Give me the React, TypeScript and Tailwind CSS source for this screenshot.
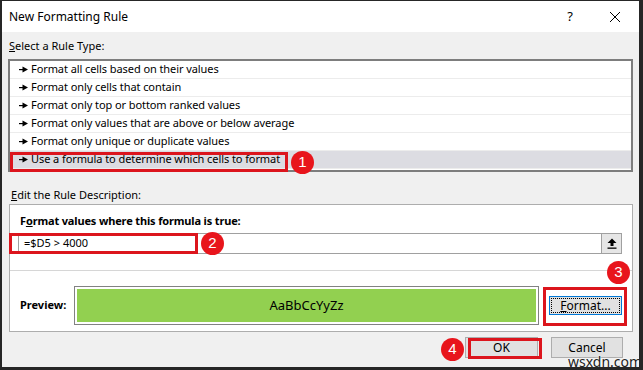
import React from "react";

const Arrow = () => (
  <svg width="10" height="7" viewBox="0 0 10 7" className="mr-[2px] shrink-0">
    <rect x="0" y="3" width="5" height="1.2" fill="#000" />
    <path d="M3.5 0.5 L9 3.6 L3.5 6.5 Z" fill="#000" />
  </svg>
);

const Badge = ({ n, className }: { n: string; className: string }) => (
  <div
    className={`absolute flex h-[23px] w-[23px] items-center justify-center rounded-full bg-[#e8151c] text-[15px] text-white ${className}`}
    style={{ fontFamily: "'Liberation Sans', Arial, sans-serif" }}
  >
    {n}
  </div>
);

const rules = [
  "Format all cells based on their values",
  "Format only cells that contain",
  "Format only top or bottom ranked values",
  "Format only values that are above or below average",
  "Format only unique or duplicate values",
  "Use a formula to determine which cells to format",
];

export default function App() {
  return (
    <div className="relative h-[370px] w-[643px] overflow-hidden border-b-[3px] border-l-2 border-r-4 border-t border-[#262626] bg-[#f0f0f0] font-['Noto_Sans',sans-serif] text-[11px] text-black">
      {/* title bar */}
      <div className="flex h-[31px] items-center bg-white pl-[7px] pr-[18px] text-[12px]">
        <span>New Formatting Rule</span>
        <span className="ml-auto text-[13px]">?</span>
        <svg width="12" height="12" viewBox="0 0 12 12" className="ml-[36px]">
          <path d="M1 1 L11 11 M11 1 L1 11" stroke="#000" strokeWidth="1" />
        </svg>
      </div>

      <div className="px-[6px]">
        <div className="h-[27px] pt-[6px] pl-[1px] leading-[16px]">
          <span className="underline">S</span>elect a Rule Type:
        </div>

        {/* rule list */}
        <div className="h-[113px] border-2 border-[#7d7d7d] bg-white">
          {rules.map((r, i) => (
            <div
              key={r}
              className={`flex h-[18px] items-center border-b border-[#ececec] pl-[9px] text-[11px] tracking-[-0.08px] ${
                i === 5 ? "bg-[#dcdce2]" : ""
              }`}
            >
              <Arrow />
              {r}
            </div>
          ))}
        </div>

        <div className="h-[32px] pt-[15px] pl-[3px] leading-[16px]">
          <span className="underline">E</span>dit the Rule Description:
        </div>

        {/* description panel */}
        <div className="ml-[1px] h-[128px] border border-[#adadad] bg-white">
          <div className="pt-[8px] pl-[10px] text-[11px] font-bold leading-[16px] tracking-[-0.15px]">
            F<span className="underline">o</span>rmat values where this formula is true:
          </div>
          <div className="mt-[4px] ml-[8px] mr-[10px] flex h-[21px] items-center border border-[#a0a0a0]">
            <span className="pl-[5px] text-[11px]">=$D5 &gt; 4000</span>
            <div className="ml-auto flex h-[19px] w-[20px] items-center justify-center border-l border-[#a0a0a0] bg-[#e6e6e6]">
              <svg width="10" height="11" viewBox="0 0 10 11">
                <path d="M5 0.5 L9.5 5 L6.5 5 L6.5 8 L3.5 8 L3.5 5 L0.5 5 Z" fill="#000" />
                <rect x="0.5" y="9.5" width="9" height="1.3" fill="#000" />
              </svg>
            </div>
          </div>
          <div className="mt-[16px] border-t border-[#d6d6d6]" />
          <div className="mt-[15px] flex h-[39px] items-center pl-[10px]">
            <span className="w-[54px] text-[11px] font-bold">Preview:</span>
            <div className="flex h-[39px] w-[465px] items-center justify-center border border-[#828282] p-[2px]">
              <div className="flex h-full w-full items-center justify-center bg-[#92d050] text-[13px]">
                AaBbCcYyZz
              </div>
            </div>
            <div className="ml-[10px] flex h-[19px] w-[73px] items-center justify-center border border-[#0078d7] bg-[#e1e1e1] p-[1px]">
              <div className="flex h-full w-full items-center justify-center border border-dotted border-black text-[12px]">
                <span className="underline">F</span>ormat...
              </div>
            </div>
          </div>
        </div>

        {/* bottom buttons */}
        <div className="flex justify-end pt-[5px] pr-[10px]">
          <div className="flex h-[21px] w-[73px] items-center justify-center border border-[#adadad] bg-[#e1e1e1] text-[12px]">
            OK
          </div>
          <div className="ml-[13px] flex h-[21px] w-[72px] items-center justify-center border border-[#adadad] bg-[#e1e1e1] text-[12px]">
            Cancel
          </div>
        </div>
      </div>

      {/* annotation boxes */}
      <div className="absolute left-[8px] top-[151px] h-[20px] w-[278px] border-[3px] border-[#dc151d]" />
      <div className="absolute left-[7px] top-[232px] h-[21px] w-[189px] border-[3px] border-[#dc151d]" />
      <div className="absolute left-[541px] top-[286px] h-[39px] w-[84px] border-[3px] border-[#dc151d]" />
      <div className="absolute left-[466px] top-[337px] h-[21px] w-[74px] border-[3px] border-[#dc151d]" />
      <Badge n="1" className="left-[289px] top-[150px]" />
      <Badge n="2" className="left-[199px] top-[231px]" />
      <Badge n="3" className="left-[605px] top-[260px]" />
      <Badge n="4" className="left-[439px] top-[337px]" />

      <div
        className="absolute left-[566px] top-[353px] text-[14px] leading-[16px] text-[#222]"
        style={{ textShadow: "0 0 2px #fff, 0 0 2px #fff" }}
      >
        wsxdn.com
      </div>
    </div>
  );
}
